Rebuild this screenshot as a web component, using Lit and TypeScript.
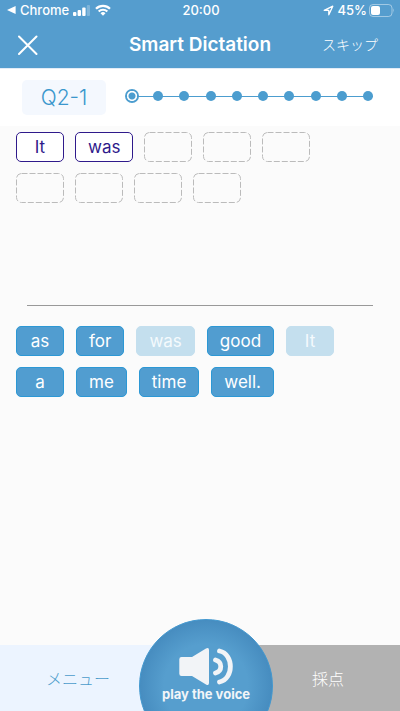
import { LitElement, html, css, svg } from "lit";
import { customElement } from "lit/decorators.js";
import { classMap } from "lit/directives/class-map.js";

interface Word {
  text: string;
  used?: boolean;
}

const STEPS = 10;
const ANSWER = ["It", "was"];
const SLOTS = 9;
const BANK: Word[] = [
  { text: "as" },
  { text: "for" },
  { text: "was", used: true },
  { text: "good" },
  { text: "It", used: true },
  { text: "a" },
  { text: "me" },
  { text: "time" },
  { text: "well." },
];

@customElement("status-bar")
export class StatusBar extends LitElement {
  static styles = css`
    :host {
      display: grid;
      grid-template-columns: 1fr auto 1fr;
      align-items: center;
      height: 20px;
      padding: 0 5px 0 7px;
      font-size: 13px;
      font-weight: 500;
      line-height: 20px;
      color: #fff;
    }
    .side {
      display: flex;
      align-items: center;
    }
    .end {
      justify-content: flex-end;
    }
    .back {
      margin-right: 4px;
    }
    .bars {
      margin: 0 5px 0 4px;
    }
    .arrow {
      margin-right: 4px;
    }
    .battery {
      margin-left: 2px;
    }
    svg {
      display: block;
      flex: none;
    }
  `;

  render() {
    return html`
      <div class="side">
        <svg class="back" width="9" height="8" viewBox="0 0 9 8">
          <path d="M0 4 8.600 0v8z" fill="#fff" />
        </svg>
        <span>Chrome</span>
        <svg class="bars" width="17" height="11" viewBox="0 0 17 11" fill="#fff">
          <rect x="0" y="7" width="3.400" height="4" rx="1" />
          <rect x="4.600" y="5" width="3.400" height="6" rx="1" />
          <rect x="9.200" y="2.500" width="3.400" height="8.500" rx="1" />
          <rect x="13.800" y="0" width="3.200" height="11" rx="1" opacity=".25" />
        </svg>
        <svg width="16" height="12" viewBox="0 0 16 12">
          <g fill="none" stroke="#fff" stroke-width="2.200">
            <path d="M1 4.700a9.900 9.900 0 0 1 14 0" />
            <path d="M3.700 7.500a6.100 6.100 0 0 1 8.600 0" />
          </g>
          <path d="M8 11.800 5.500 9.300a3.600 3.600 0 0 1 5 0z" fill="#fff" />
        </svg>
      </div>
      <span>20:00</span>
      <div class="side end">
        <svg class="arrow" width="11" height="11" viewBox="0 0 11 11">
          <path d="M1.200 5.300 9.800 1.200 5.800 9.800V5.300z" fill="none" stroke="#fff" stroke-width="1.300" stroke-linejoin="round" />
        </svg>
        <span>45%</span>
        <svg class="battery" width="26" height="13" viewBox="0 0 26 13">
          <rect x=".5" y=".5" width="22.500" height="12" rx="3.500" fill="none" stroke="#fff" stroke-opacity=".45" />
          <rect x="2" y="2" width="9" height="9" rx="2" fill="#fff" />
          <path d="M24.300 4.300q1.700 2.200 0 4.400z" fill="#fff" opacity=".5" />
        </svg>
      </div>
    `;
  }
}

@customElement("step-track")
export class StepTrack extends LitElement {
  static styles = css`
    :host {
      display: block;
    }
    ol {
      display: flex;
      align-items: center;
      justify-content: space-between;
      height: 10px;
      margin: 0;
      padding: 0;
      list-style: none;
      background: linear-gradient(#4c9dcf, #4c9dcf) center / 100% 1px no-repeat;
    }
    .dot {
      box-sizing: border-box;
      width: 10px;
      height: 10px;
      border-radius: 50%;
      background: #4c9dcf;
    }
    .current {
      background: radial-gradient(circle, #4c9dcf 3px, #fff 4px);
      box-shadow: 0 0 0 2px #4c9dcf;
    }
  `;

  render() {
    return html`
      <ol aria-label="Progress">
        ${Array.from(
          { length: STEPS },
          (_, i) => html`<li class=${classMap({ dot: true, current: i === 0 })}></li>`
        )}
      </ol>
    `;
  }
}

@customElement("app-root")
export class AppRoot extends LitElement {
  static styles = css`
    :host {
      display: flex;
      flex-direction: column;
      min-height: 100vh;
      overflow: hidden;
      background: #fbfbfb;
      font-family: Inter, "Noto Sans CJK JP", sans-serif;
    }
    button {
      margin: 0;
      padding: 0;
      border: 0;
      background: none;
      font: inherit;
      color: inherit;
      cursor: pointer;
    }
    svg {
      display: block;
    }
    header {
      background: #559dce;
      color: #fff;
    }
    .nav {
      box-sizing: border-box;
      display: grid;
      grid-template-columns: 1fr auto 1fr;
      align-items: center;
      height: 48px;
      padding: 2px 18px 0;
    }
    h1 {
      margin: 0;
      font-size: 19px;
      font-weight: 600;
      line-height: 24px;
    }
    .close {
      justify-self: start;
    }
    .skip {
      justify-self: end;
      padding-right: 4px;
      font-size: 14px;
      font-weight: 300;
      line-height: 20px;
    }
    .progress {
      display: flex;
      align-items: center;
      gap: 21px;
      height: 57px;
      padding: 0 27px 0 22px;
      border-top: 1px solid #e3ecf7;
      background: #fff;
    }
    .number {
      width: 84px;
      border-radius: 5px;
      background: #f4f8fe;
      color: #3b97cd;
      font-size: 21px;
      font-weight: 300;
      line-height: 35px;
      text-align: center;
    }
    step-track {
      flex: 1;
      padding-bottom: 3px;
    }
    main {
      flex: 1;
      padding: 6px 16px 0;
    }
    .words {
      display: flex;
      flex-wrap: wrap;
      align-content: flex-start;
      gap: 11px;
    }
    .answer {
      min-height: 173px;
      padding-right: 48px;
    }
    .bank {
      column-gap: 12px;
    }
    .tile {
      box-sizing: border-box;
      min-width: 48px;
      height: 30px;
      padding: 0 12px;
      border: 1px solid #2c98d5;
      border-radius: 5px;
      background: #519dd0;
      color: #fff;
      font-size: 17px;
      line-height: 28px;
    }
    .placed {
      border-color: #2f1a8b;
      background: #fff;
      color: #2f1a8b;
    }
    .used {
      border-color: #c4dfee;
      background: #c4dfee;
      color: #f4fafd;
    }
    .slot {
      width: 48px;
      height: 30px;
    }
    hr {
      height: 1px;
      margin: 0 11px 20px;
      border: 0;
      background: #999;
    }
    footer {
      position: relative;
      display: flex;
      height: 66px;
      font-size: 16px;
      font-weight: 300;
    }
    .menu,
    .score {
      width: 50%;
    }
    .menu {
      padding-right: 44px;
      background: #ecf4ff;
      color: #4b9ccb;
    }
    .score {
      padding-left: 56px;
      background: #b2b2b2;
      color: #fff;
    }
    .play {
      position: absolute;
      top: -26px;
      left: calc(50% + 6px);
      box-sizing: border-box;
      display: flex;
      flex-direction: column;
      align-items: center;
      width: 134px;
      height: 134px;
      padding-top: 28px;
      border: 1px solid #4398cf;
      border-radius: 50%;
      transform: translateX(-50%);
      background: radial-gradient(circle, #569ece 45%, #478dc0 70%);
      color: #f2f5f8;
      font-family: Inter, sans-serif;
      font-size: 13px;
      font-weight: 700;
      line-height: 16px;
      white-space: nowrap;
    }
  `;

  private renderSlot() {
    return html`
      <svg class="slot" viewBox="0 0 48 30">
        ${svg`<rect x=".5" y=".5" width="47" height="29" rx="5" fill="none" stroke="#bbb" stroke-dasharray="6 2" />`}
      </svg>
    `;
  }

  render() {
    return html`
      <header>
        <status-bar></status-bar>
        <div class="nav">
          <button class="close" aria-label="Close">
            <svg width="20" height="20" viewBox="0 0 20 20">
              <path d="M1 1.500 18.500 19M18.500 1.500 1 19" stroke="#fff" stroke-width="2" stroke-linecap="round" />
            </svg>
          </button>
          <h1>Smart Dictation</h1>
          <button class="skip">スキップ</button>
        </div>
      </header>
      <section class="progress">
        <div class="number">Q2-1</div>
        <step-track></step-track>
      </section>
      <main>
        <div class="words answer">
          ${ANSWER.map((w) => html`<button class="tile placed">${w}</button>`)}
          ${Array.from({ length: SLOTS - ANSWER.length }, () => this.renderSlot())}
        </div>
        <hr />
        <div class="words bank">
          ${BANK.map(
            (w) => html`<button class=${classMap({ tile: true, used: !!w.used })} ?disabled=${w.used}>${w.text}</button>`
          )}
        </div>
      </main>
      <footer>
        <button class="menu">メニュー</button>
        <button class="score">採点</button>
        <button class="play">
          <svg width="54" height="38" viewBox="0 0 54 38">
            <path
              d="M2.500 9H13L27 .500Q30-1 30 2v33q0 3-3 1.500L13 28H2.500Q.3 28 .3 25.800V11.200Q.3 9 2.500 9z"
              fill="#f2f4f7"
            />
            <g fill="none" stroke="#f2f4f7" stroke-width="4.800" stroke-linecap="round">
              <path d="M36.500 12C43.500 14 43.500 23 36.500 25" />
              <path d="M40.500 3C55 6 55 31 40.500 34" />
            </g>
          </svg>
          <span>play the voice</span>
        </button>
      </footer>
    `;
  }
}
